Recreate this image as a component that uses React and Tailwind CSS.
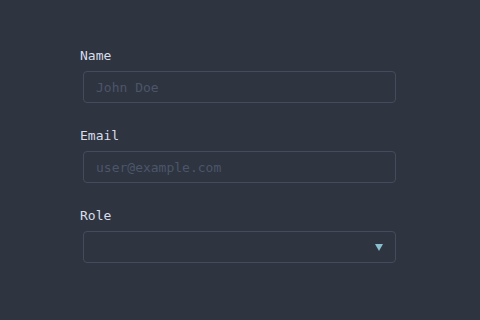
const fields = [
  { label: 'Name', placeholder: 'John Doe' },
  { label: 'Email', placeholder: 'user@example.com' },
];

export default function App() {
  return (
    <div
      className="w-[480px] h-[320px] bg-[#2e3440] pt-[46px] pl-[80px]"
      style={{ fontFamily: '"DejaVu Sans Mono", "Liberation Mono", monospace' }}
    >
      {fields.map((f) => (
        <div key={f.label} className="mb-[23px]">
          <label className="block text-[13px] leading-[20px] text-[#d8dee9]">{f.label}</label>
          <input
            type="text"
            placeholder={f.placeholder}
            className="mt-[5px] ml-[3px] block w-[313px] h-[32px] rounded-[4px] border border-[#434c5e] bg-transparent px-[12px] text-[13px] text-[#d8dee9] placeholder:text-[#4c566a] outline-none"
          />
        </div>
      ))}
      <div>
        <label className="block text-[13px] leading-[20px] text-[#d8dee9]">Role</label>
        <div className="mt-[5px] ml-[3px] flex w-[313px] h-[32px] items-center justify-end rounded-[4px] border border-[#434c5e] pr-[12px]">
          <svg width="8" height="7" viewBox="0 0 8 7">
            <polygon points="0,0 8,0 4,7" fill="#88c0d0" />
          </svg>
        </div>
      </div>
    </div>
  );
}
